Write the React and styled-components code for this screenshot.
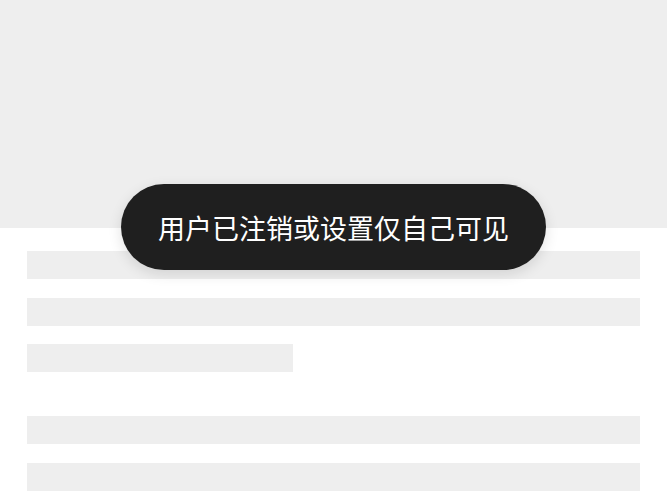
import React from "react";
import styled, { createGlobalStyle } from "styled-components";

const Global = createGlobalStyle`
  html, body { margin: 0; padding: 0; background: #ffffff; }
  body { font-family: "Noto Sans CJK SC", "Noto Sans", sans-serif; }
`;

const Page = styled.div`
  position: relative;
  width: 667px;
  height: 500px;
  overflow: hidden;
  background: #ffffff;
`;

const Banner = styled.div`
  height: 228px;
  background: #eeeeee;
`;

const Skeleton = styled.div`
  display: flex;
  flex-direction: column;
  padding: 23px 27px 0 27px;
`;

const Group = styled.div`
  display: flex;
  flex-direction: column;
  gap: 18.5px;
  margin-bottom: ${(p) => p.$after || 0}px;
`;

const Line = styled.div`
  height: 28px;
  width: ${(p) => p.$width || "100%"};
  background: #eeeeee;
`;

const Toast = styled.div`
  position: absolute;
  left: 121px;
  top: 184px;
  width: 425px;
  height: 86px;
  box-sizing: border-box;
  border-radius: 43px;
  background: #1f1f1f;
  box-shadow: 0 4px 14px rgba(0, 0, 0, 0.12);
  display: flex;
  align-items: center;
  justify-content: center;
  color: #ffffff;
  font-size: 27px;
  font-weight: 400;
  white-space: nowrap;
`;

export default function App() {
  return (
    <>
      <Global />
      <Page>
        <Banner />
        <Skeleton>
          <Group $after={44}>
            <Line />
            <Line />
            <Line $width="266px" />
          </Group>
          <Group>
            <Line />
            <Line />
          </Group>
        </Skeleton>
        <Toast>用户已注销或设置仅自己可见</Toast>
      </Page>
    </>
  );
}
